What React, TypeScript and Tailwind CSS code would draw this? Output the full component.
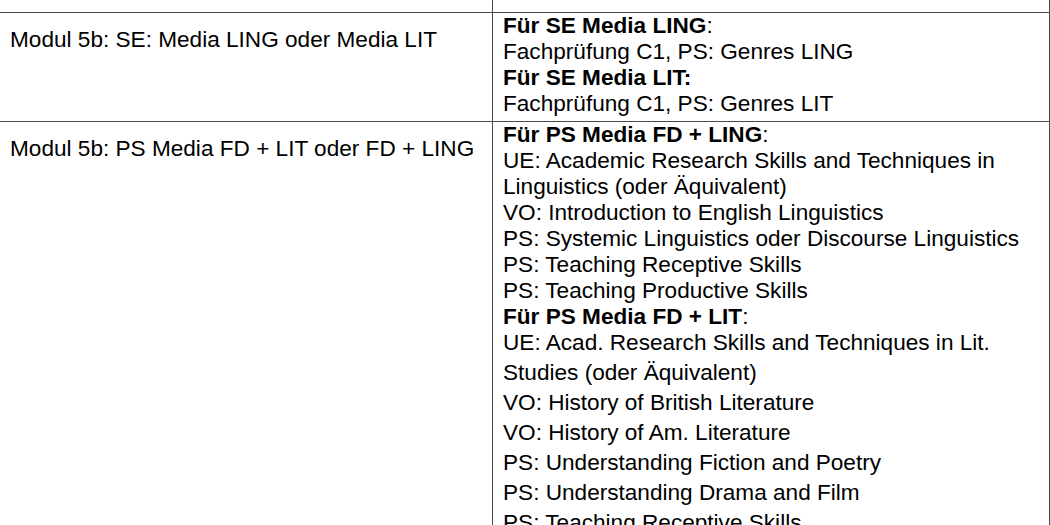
import React from 'react';

const Row: React.FC<{ left: string; children: React.ReactNode }> = ({ left, children }) => (
  <div className="grid grid-cols-[493px_1fr] border-t border-[#4a4a4a]">
    <div className="border-r border-[#4a4a4a] pl-[10px] pt-[14px]">
      <p className="leading-[26px]">{left}</p>
    </div>
    <div className="border-r border-[#4a4a4a] pl-[10px] pb-[4px]">{children}</div>
  </div>
);

const Head: React.FC<{ bold: string; rest?: string }> = ({ bold, rest }) => (
  <p className="leading-[26px]">
    <span className="font-bold">{bold}</span>
    {rest}
  </p>
);

const Line: React.FC<{ text: string; spaced?: boolean }> = ({ text, spaced }) => (
  <p className={spaced ? 'leading-[26px] mt-[4px]' : 'leading-[26px]'}>{text}</p>
);

export default function App() {
  return (
    <div className="w-[1050px] h-[525px] overflow-hidden bg-white text-black text-[22.6px] font-['Liberation_Sans',Arial,sans-serif]">
      <div className="grid grid-cols-[493px_1fr] h-[12px]">
        <div className="border-r border-[#4a4a4a]" />
        <div className="border-r border-[#4a4a4a]" />
      </div>

      <Row left="Modul 5b: SE: Media LING oder Media LIT">
        <Head bold="Für SE Media LING" rest=":" />
        <Line text="Fachprüfung C1, PS: Genres LING" />
        <Head bold="Für SE Media LIT:" />
        <Line text="Fachprüfung C1, PS: Genres LIT" />
      </Row>

      <Row left="Modul 5b: PS Media FD + LIT oder FD + LING">
        <Head bold="Für PS Media FD + LING" rest=":" />
        <Line text="UE: Academic Research Skills and Techniques in" />
        <Line text="Linguistics (oder Äquivalent)" />
        <Line text="VO: Introduction to English Linguistics" />
        <Line text="PS: Systemic Linguistics oder Discourse Linguistics" />
        <Line text="PS: Teaching Receptive Skills" />
        <Line text="PS: Teaching Productive Skills" />
        <Head bold="Für PS Media FD + LIT" rest=":" />
        <Line text="UE: Acad. Research Skills and Techniques in Lit." />
        <Line spaced text="Studies (oder Äquivalent)" />
        <Line spaced text="VO: History of British Literature" />
        <Line spaced text="VO: History of Am. Literature" />
        <Line spaced text="PS: Understanding Fiction and Poetry" />
        <Line spaced text="PS: Understanding Drama and Film" />
        <Line spaced text="PS: Teaching Receptive Skills" />
      </Row>
    </div>
  );
}
